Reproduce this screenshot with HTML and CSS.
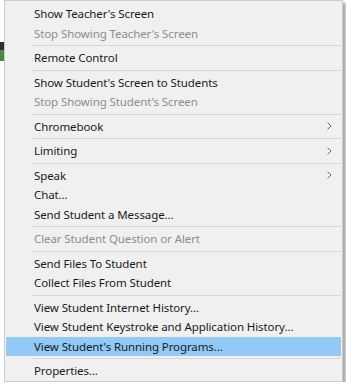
FILE: index.html
```html
<!DOCTYPE html>
<html lang="en">
<head>
    <meta charset="UTF-8">
    <meta name="viewport" content="width=device-width, initial-scale=1.0">
    <title>Student Menu</title>
    <link rel="stylesheet" href="styles.css">
</head>
<body>
    <!-- Bit of the window behind the menu -->
    <div class="backdrop">
        <div class="bar-dark"></div>
        <div class="bar-green"></div>
    </div>

    <!-- Context menu -->
    <ul class="menu">
        <li class="item">Show Teacher's Screen</li>
        <li class="item disabled">Stop Showing Teacher's Screen</li>
        <li class="sep"></li>
        <li class="item">Remote Control</li>
        <li class="sep"></li>
        <li class="item">Show Student's Screen to Students</li>
        <li class="item disabled">Stop Showing Student's Screen</li>
        <li class="sep"></li>
        <li class="item sub">Chromebook
            <svg class="arrow" width="5" height="8" viewBox="0 0 5 8"><path d="M0.5 0.5 L4 4 L0.5 7.5" fill="none" stroke="#666" stroke-width="1"/></svg>
        </li>
        <li class="sep"></li>
        <li class="item sub">Limiting
            <svg class="arrow" width="5" height="8" viewBox="0 0 5 8"><path d="M0.5 0.5 L4 4 L0.5 7.5" fill="none" stroke="#666" stroke-width="1"/></svg>
        </li>
        <li class="sep"></li>
        <li class="item sub">Speak
            <svg class="arrow" width="5" height="8" viewBox="0 0 5 8"><path d="M0.5 0.5 L4 4 L0.5 7.5" fill="none" stroke="#666" stroke-width="1"/></svg>
        </li>
        <li class="item">Chat…</li>
        <li class="item">Send Student a Message…</li>
        <li class="sep"></li>
        <li class="item disabled">Clear Student Question or Alert</li>
        <li class="sep"></li>
        <li class="item">Send Files To Student</li>
        <li class="item">Collect Files From Student</li>
        <li class="sep"></li>
        <li class="item">View Student Internet History…</li>
        <li class="item">View Student Keystroke and Application History…</li>
        <li class="item active">View Student's Running Programs…</li>
        <li class="sep"></li>
        <li class="item">Properties…</li>
    </ul>
</body>
</html>
```
FILE: styles.css
```css
/* General */
body {
    margin: 0;
    padding: 0;
    background-color: #fff;
    font-family: "Noto Sans", "Open Sans", sans-serif;
    font-size: 11.5px;
    letter-spacing: -0.1px;
    display: flex;
    align-items: flex-start;
}

/* Window behind */
.backdrop {
    width: 4px;
    padding-top: 42px;
}
.bar-dark {
    height: 8px;
    background-color: #2e3238;
}
.bar-green {
    height: 11px;
    background-color: #4c8a3a;
}

/* Menu */
.menu {
    list-style: none;
    margin: 0;
    width: 335px;
    padding: 3px 1px 0.5px 1px;
    background-color: #f0f0f0;
    border: 1px solid #cccccc;
    box-shadow: 3px 3px 3px rgba(0, 0, 0, 0.35);
}
.item {
    height: 19.5px;
    line-height: 19.5px;
    padding-left: 28px;
    color: #1a1a1a;
    white-space: nowrap;
}
.item.disabled {
    color: #8d8d8d;
}
.item.active {
    background-color: #91c9f7;
}
.sub {
    display: flex;
    align-items: center;
}
.arrow {
    margin-left: auto;
    margin-right: 9px;
}
.sep {
    height: 1px;
    margin: 2px 0 2px 25px;
    background-color: #d7d7d7;
}
```
